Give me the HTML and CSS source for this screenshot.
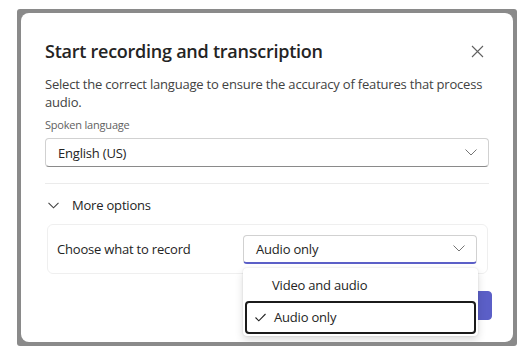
FILE: index.html
```html
<!DOCTYPE html>
<html lang="en">
<head>
    <meta charset="UTF-8">
    <title>Start recording and transcription</title>
    <link rel="stylesheet" href="styles.css">
</head>
<body>
    <div class="frame">
        <div class="dialog">
            <div class="dialog-head">
                <h1 class="dialog-title">Start recording and transcription</h1>
                <span class="close-btn">
                    <svg width="13" height="13" viewBox="0 0 13 13"><path d="M1 1 L12 12 M12 1 L1 12" stroke="#616161" stroke-width="1.1" fill="none"/></svg>
                </span>
            </div>
            <p class="dialog-desc">Select the correct language to ensure the accuracy of features that process audio.</p>
            <label class="field-label">Spoken language</label>
            <div class="select">
                <span>English (US)</span>
                <svg class="chev" width="12" height="7" viewBox="0 0 12 7"><path d="M0.5 0.5 L6 6 L11.5 0.5" stroke="#757575" stroke-width="1" fill="none"/></svg>
            </div>
            <div class="divider"></div>
            <div class="more-options">
                <svg width="11" height="7" viewBox="0 0 11 7"><path d="M0.5 0.8 L5.5 5.8 L10.5 0.8" stroke="#424242" stroke-width="1.1" fill="none"/></svg>
                <span>More options</span>
            </div>
            <div class="option-card">
                <span class="option-label">Choose what to record</span>
                <div class="dropdown">
                    <div class="select select-active">
                        <span>Audio only</span>
                        <svg class="chev" width="12" height="7" viewBox="0 0 12 7"><path d="M0.5 0.5 L6 6 L11.5 0.5" stroke="#757575" stroke-width="1" fill="none"/></svg>
                    </div>
                    <ul class="listbox">
                        <li>Video and audio</li>
                        <li class="selected">
                            <svg class="check" width="11" height="9" viewBox="0 0 11 9"><path d="M0.5 4.5 L3.8 7.8 L10.5 1" stroke="#242424" stroke-width="1.1" fill="none"/></svg>
                            Audio only
                        </li>
                    </ul>
                </div>
            </div>
            <div class="dialog-foot">
                <span class="btn-cancel">Cancel</span>
                <span class="btn-primary">Start</span>
            </div>
        </div>
    </div>
</body>
</html>
```

FILE: styles.css
```css
* {
    margin: 0;
    padding: 0;
    box-sizing: border-box;
}
ul {
    list-style: none;
}
body {
    background-color: #fff;
    font-family: "Open Sans", "Liberation Sans", sans-serif;
    letter-spacing: -0.2px;
    color: #242424;
}
.frame {
    margin: 9px 0 0 17px;
    width: 500px;
    height: 337px;
    padding: 4px;
    background-color: #8a8a8a;
    border-radius: 3px;
}
.dialog {
    height: 100%;
    padding: 24px 24px 0;
    background-color: #fff;
    border-radius: 8px;
    overflow: hidden;
}
.dialog-head {
    display: flex;
    align-items: center;
    justify-content: space-between;
    height: 28px;
}
.dialog-title {
    font-size: 18px;
    font-weight: 600;
    line-height: 28px;
    letter-spacing: -0.25px;
}
.close-btn {
    display: flex;
    margin-right: 5px;
}
.dialog-desc {
    margin-top: 10px;
    font-size: 13px;
    line-height: 18px;
    color: #424242;
}
.field-label {
    display: block;
    margin-top: 6px;
    font-size: 11px;
    line-height: 16px;
    color: #616161;
}
.select {
    display: flex;
    align-items: center;
    justify-content: space-between;
    margin-top: 5px;
    height: 29px;
    padding: 0 12px;
    font-size: 13px;
    border: 1px solid #d1d1d1;
    border-bottom-color: #8a8a8a;
    border-radius: 4px;
}
.select .chev {
    margin-right: -1px;
}
.divider {
    margin-top: 16px;
    height: 1px;
    background-color: #ebebeb;
}
.more-options {
    display: flex;
    align-items: center;
    gap: 13px;
    margin-top: 11px;
    padding-left: 3px;
    font-size: 13px;
    line-height: 20px;
}
.option-card {
    display: flex;
    align-items: center;
    justify-content: space-between;
    margin: 9px 1px 0 2px;
    height: 50px;
    padding: 0 10px 0 9px;
    border: 1px solid #efefef;
    border-radius: 6px;
    font-size: 13px;
}
.dropdown {
    position: relative;
    width: 234px;
}
.dropdown .select {
    margin-top: 0;
}
.select-active {
    border-bottom: 2px solid #5b5fc7;
}
.listbox {
    position: absolute;
    top: 33px;
    left: 0;
    right: -1px;
    z-index: 2;
    padding: 2px;
    background-color: #fff;
    border-radius: 4px;
    box-shadow: 0 0 2px rgba(0,0,0,0.12), 0 4px 8px rgba(0,0,0,0.14);
    font-size: 13px;
}
.listbox li {
    display: flex;
    align-items: center;
    height: 31px;
    padding-left: 27px;
}
.listbox li.selected {
    height: 33px;
    padding-left: 8px;
    border: 2px solid #1b1b1b;
    border-radius: 4px;
}
.listbox .check {
    margin-right: 8px;
}
.dialog-foot {
    display: flex;
    justify-content: flex-end;
    gap: 8px;
    margin-top: 17px;
    margin-right: -3px;
}
.btn-cancel,
.btn-primary {
    display: block;
    height: 29px;
    padding: 0 20px;
    font-size: 13px;
    font-weight: 600;
    line-height: 27px;
    border-radius: 4px;
}
.btn-cancel {
    border: 1px solid #d1d1d1;
}
.btn-primary {
    color: #fff;
    background-color: #5b5fc7;
    border: 1px solid #5b5fc7;
}
```
